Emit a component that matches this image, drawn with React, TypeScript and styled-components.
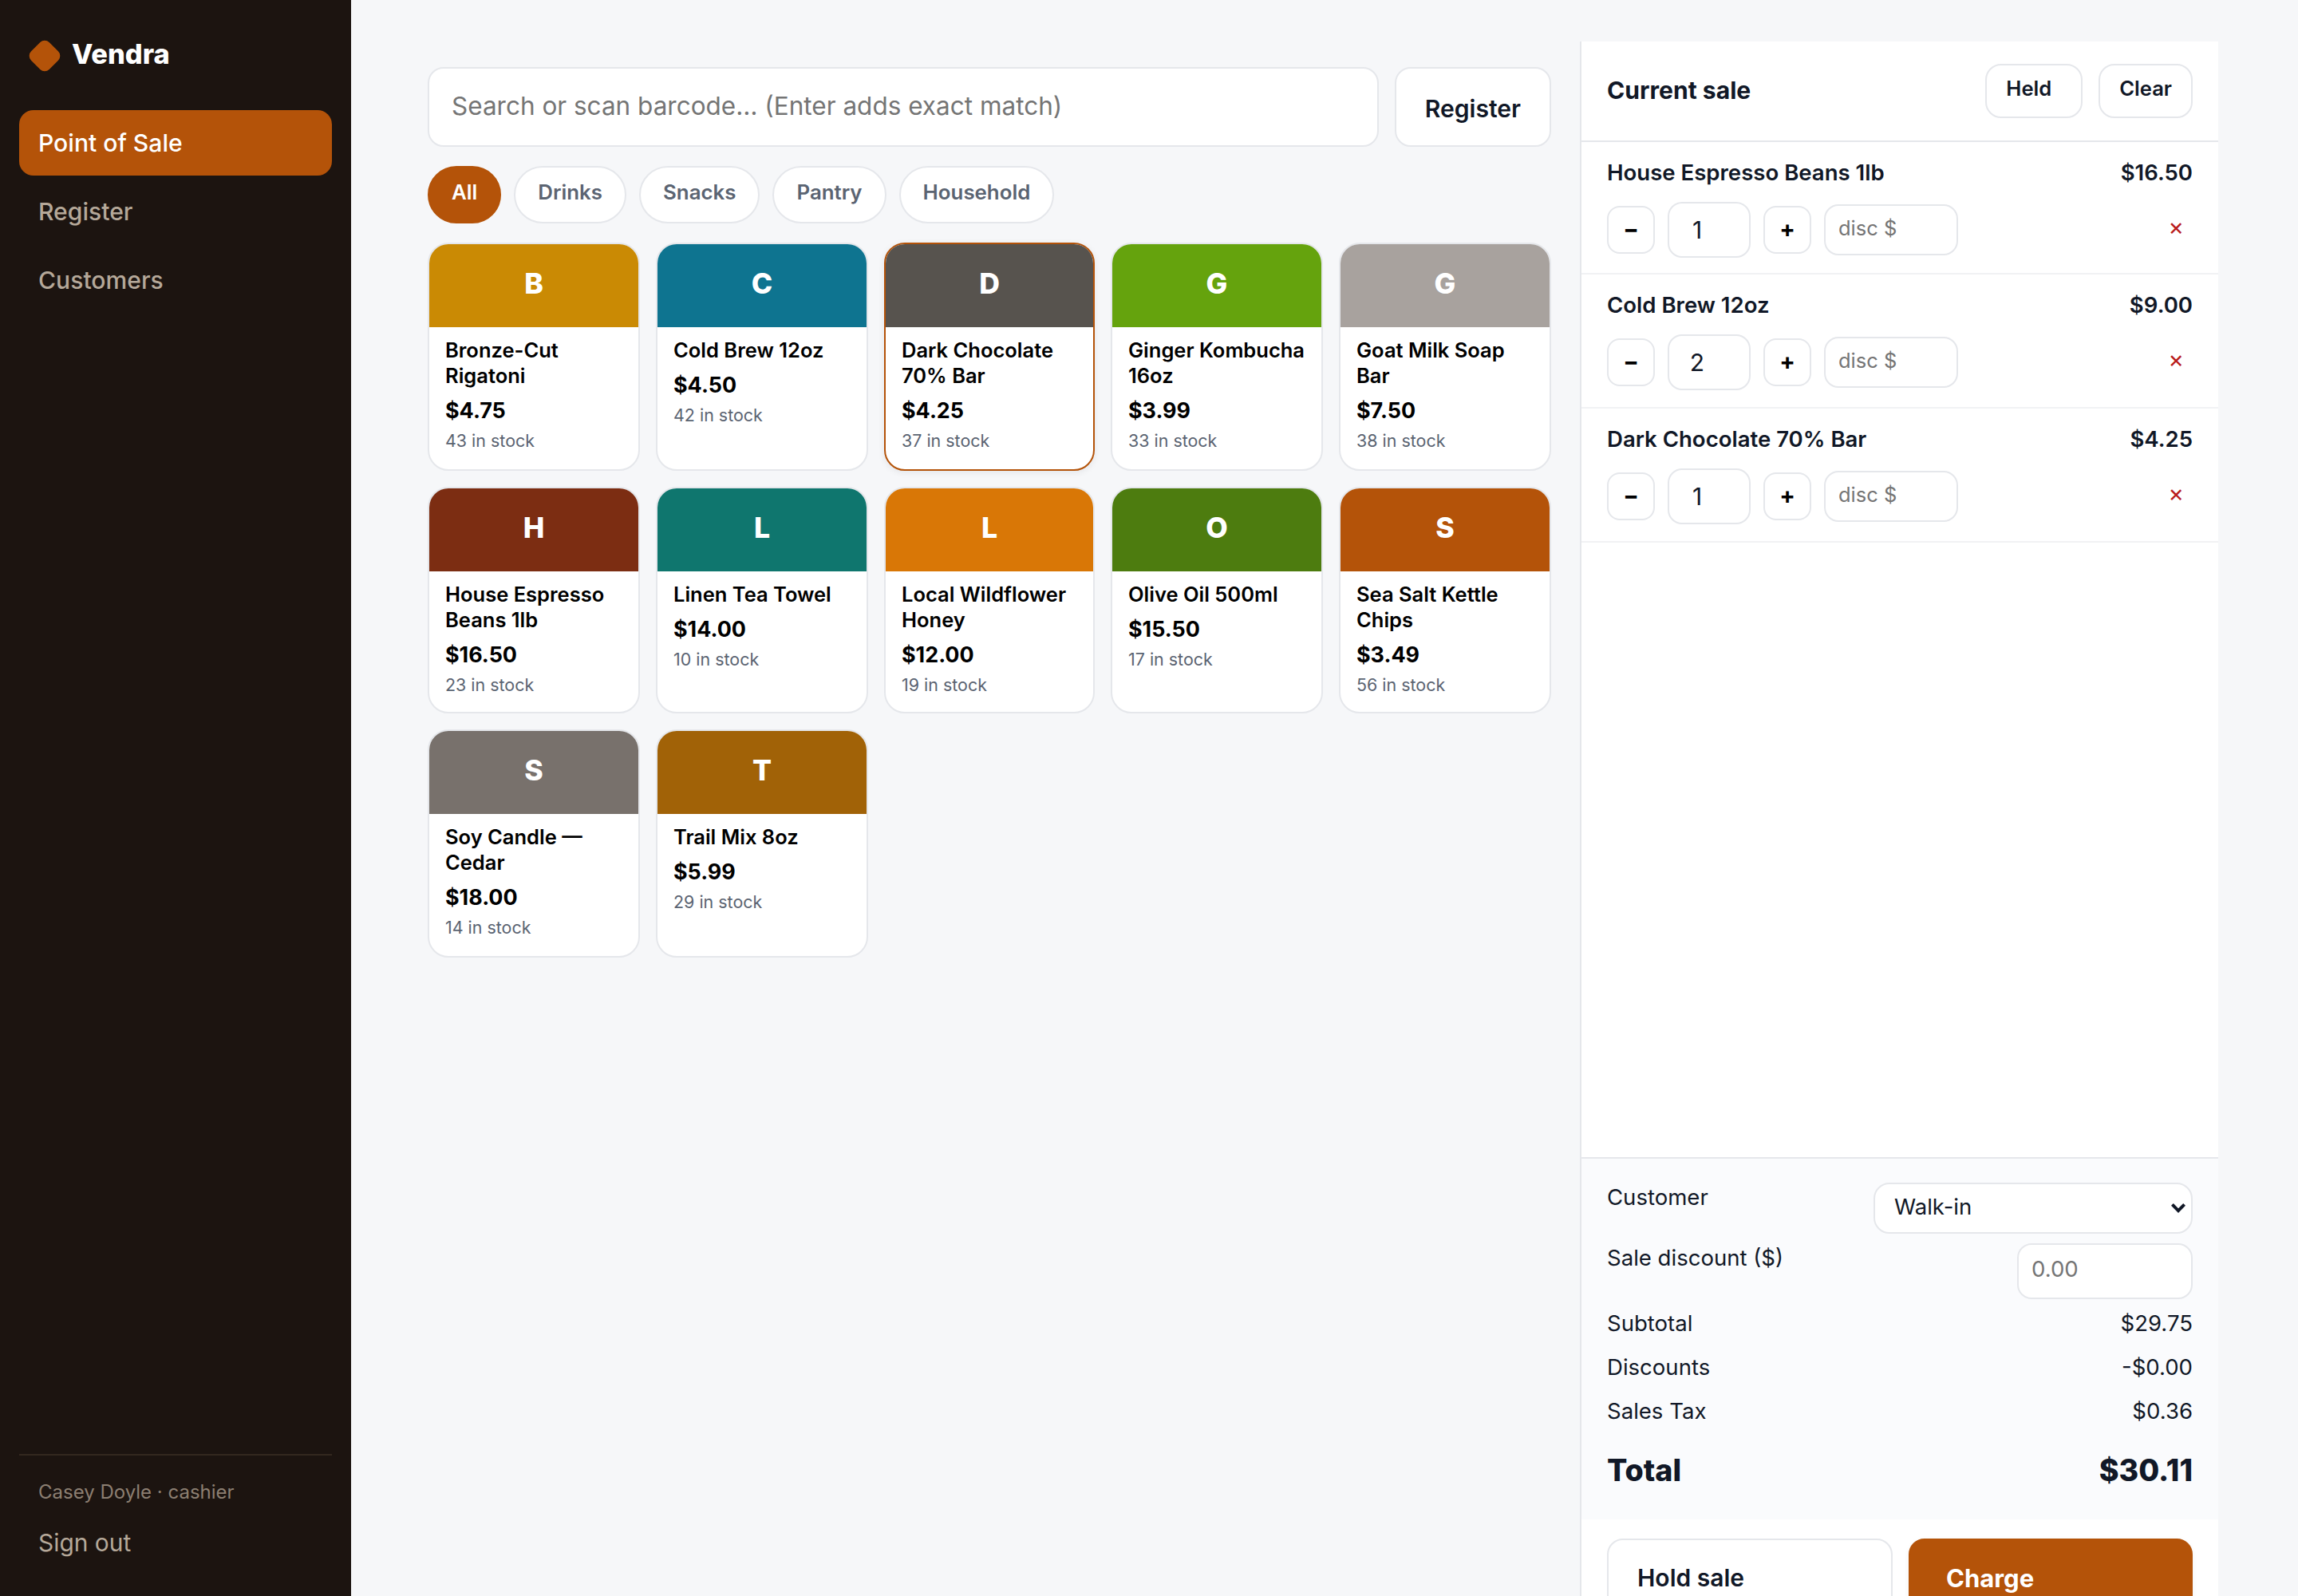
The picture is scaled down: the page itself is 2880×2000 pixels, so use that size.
import React from 'react';
import styled, { createGlobalStyle } from 'styled-components';

const GlobalStyle = createGlobalStyle`
  *, *::before, *::after {
    box-sizing: border-box;
  }

  body {
    margin: 0;
    background: #f6f7f9;
    color: #111827;
    font-family: Inter, 'Liberation Sans', sans-serif;
    overflow: hidden;
  }

  button, input {
    font-family: inherit;
    margin: 0;
    outline: none;
  }

  input::placeholder {
    color: #757575;
    opacity: 1;
  }
`;

const Shell = styled.div`
  display: flex;
  width: 2880px;
  height: 2000px;
  overflow: hidden;
`;

/* ---------- sidebar ---------- */

const Sidebar = styled.aside`
  display: flex;
  flex-direction: column;
  flex: 0 0 440px;
  height: 2000px;
  padding: 54px 24px 40px;
  background: #1c1410;
`;

const Brand = styled.div`
  display: flex;
  align-items: center;
  gap: 18px;
  height: 32px;
  margin: 0 0 52px 16px;
`;

const BrandMark = styled.span`
  width: 32px;
  height: 32px;
  border-radius: 8px;
  background: #b45309;
  transform: rotate(45deg);
`;

const BrandName = styled.span`
  padding-bottom: 4px;
  color: #fff;
  font-size: 34.4px;
  font-weight: 800;
  line-height: 40px;
`;

const Nav = styled.nav`
  display: flex;
  flex-direction: column;
  gap: 4px;
`;

const NavLink = styled.a<{ $active?: boolean }>`
  display: flex;
  align-items: center;
  height: 82px;
  padding: 0 24px;
  border-radius: 18px;
  background: ${(p) => (p.$active ? '#b45309' : 'transparent')};
  color: ${(p) => (p.$active ? '#fff' : '#b5a899')};
  font-size: 30.1px;
  font-weight: 500;
`;

const SidebarFooter = styled.div`
  display: flex;
  flex-direction: column;
  height: 138px;
  margin-top: auto;
  padding: 27px 24px 0;
  border-top: 2px solid #33281f;
`;

const UserName = styled.span`
  color: #8c7f72;
  font-size: 24px;
  line-height: 38px;
`;

const SignOut = styled.a`
  margin-top: 24px;
  color: #b5a899;
  font-size: 29.9px;
  line-height: 40px;
`;

/* ---------- catalog ---------- */

const Main = styled.main`
  display: flex;
  align-items: flex-start;
  flex: 1;
  padding: 52px 100px 0 60px;
`;

const Catalog = styled.section`
  display: flex;
  flex-direction: column;
  gap: 24px;
  flex: 1;
  min-width: 0;
  padding: 32px 36px;
`;

const SearchRow = styled.div`
  display: flex;
  gap: 20px;
  height: 100px;
`;

const SearchInput = styled.input`
  flex: 1;
  min-width: 0;
  padding: 0 28px 3px;
  border: 2px solid #e5e7eb;
  border-radius: 20px;
  background: #fff;
  font-size: 31.5px;
`;

const RegisterButton = styled.button`
  padding: 3px 36px 0;
  border: 2px solid #e5e7eb;
  border-radius: 20px;
  background: #fff;
  color: #111827;
  font-size: 30.1px;
  font-weight: 600;
`;

const Pills = styled.div`
  display: flex;
  gap: 16px;
`;

const Pill = styled.button<{ $active?: boolean }>`
  height: 72px;
  padding: 0 28px 7px;
  border: 2px solid ${(p) => (p.$active ? '#b45309' : '#e5e7eb')};
  border-radius: 36px;
  background: ${(p) => (p.$active ? '#b45309' : '#fff')};
  color: ${(p) => (p.$active ? '#fff' : '#5b6472')};
  font-size: 25.85px;
  font-weight: 600;
`;

const Grid = styled.div`
  display: grid;
  grid-template-columns: 266px 266px 264px 266px 266px;
  grid-template-rows: 286px 284px 286px;
  gap: 20px;
`;

const Card = styled.article<{ $focused?: boolean }>`
  overflow: hidden;
  border: 2px solid ${(p) => (p.$focused ? '#b45309' : '#e5e7eb')};
  border-radius: 26px;
  background: #fff;
  color: #000;
  box-shadow: ${(p) => (p.$focused ? '0 2px 8px rgba(16, 24, 40, 0.08)' : 'none')};
`;

const Swatch = styled.div<{ $color: string }>`
  display: flex;
  align-items: center;
  justify-content: center;
  height: 104px;
  padding-bottom: 6px;
  background: ${(p) => p.$color};
  color: #fff;
  font-size: 35.6px;
  font-weight: 800;
`;

const CardBody = styled.div`
  padding: 12.5px 16px 0 20px;
`;

const CardName = styled.div`
  font-size: 25.5px;
  font-weight: 600;
  line-height: 32px;
`;

const CardPrice = styled.div`
  margin-top: 11.5px;
  font-size: 26.9px;
  font-weight: 700;
  line-height: 32px;
`;

const CardStock = styled.div`
  margin-top: 9px;
  color: #5b6472;
  font-size: 21.45px;
  line-height: 26px;
`;

/* ---------- current sale ---------- */

const SalePanel = styled.section`
  display: flex;
  flex-direction: column;
  flex: 0 0 800px;
  height: 2000px;
  border-left: 2px solid #e5e7eb;
  background: #fff;
`;

const SaleHeader = styled.header`
  display: flex;
  align-items: center;
  gap: 20px;
  height: 126px;
  padding: 0 32px;
  border-bottom: 2px solid #e5e7eb;
`;

const SaleTitle = styled.h2`
  margin: 0 auto 0 0;
  padding-bottom: 2px;
  font-size: 30.1px;
  font-weight: 700;
`;

const SmallButton = styled.button<{ $extra?: number }>`
  height: 68px;
  padding: 0 ${(p) => 24 + (p.$extra ?? 0)}px 7px 24px;
  border: 2px solid #e5e7eb;
  border-radius: 20px;
  background: #fff;
  color: #111827;
  font-size: 25.6px;
  font-weight: 600;
`;

const Lines = styled.div`
  flex: 1;
`;

const Line = styled.div`
  height: 168px;
  padding: 21px 32px 0;
  border-bottom: 2px solid #f1f2f4;

  &:first-child {
    height: 166px;
  }
`;

const LineTop = styled.div`
  display: flex;
  justify-content: space-between;
  font-size: 27.55px;
  font-weight: 600;
  line-height: 34px;
`;

const LineControls = styled.div`
  display: flex;
  align-items: center;
  gap: 16px;
  height: 72px;
  margin-top: 19px;
`;

const StepButton = styled.button`
  width: 60px;
  height: 60px;
  padding: 0 0 4px;
  border: 2px solid #e5e7eb;
  border-radius: 16px;
  background: #fff;
  color: #000;
  font-size: 29px;
  font-weight: 700;
`;

const QtyInput = styled.input`
  width: 104px;
  height: 70px;
  padding: 0 42px 0 12px;
  border: 2px solid #e5e7eb;
  border-radius: 18px;
  background: #fff;
  color: #111827;
  font-size: 30px;
  text-align: center;
`;

const MoneyInput = styled.input<{ $wide?: boolean }>`
  width: ${(p) => (p.$wide ? 220 : 168)}px;
  height: ${(p) => (p.$wide ? 70 : 64)}px;
  padding: 0 16px ${(p) => (p.$wide ? 6 : 5)}px;
  border: 2px solid #e5e7eb;
  border-radius: 18px;
  background: #fff;
  font-size: ${(p) => (p.$wide ? 27.6 : 25.5)}px;
`;

const RemoveButton = styled.button`
  margin-left: auto;
  padding: 0 11px 8px;
  border: 0;
  background: none;
  color: #b91c1c;
  font-size: 30px;
  font-weight: 400;
`;

const Summary = styled.div`
  display: flex;
  flex-direction: column;
  gap: 12px;
  height: 454px;
  padding: 30px 32px 0;
  border-top: 2px solid #e5e7eb;
  background: #fafbfd;
`;

const SummaryRow = styled.div`
  display: flex;
  align-items: flex-start;
  justify-content: space-between;
  min-height: 43.2px;
  font-size: 27.55px;
  line-height: 36px;
`;

const TotalRow = styled.div`
  display: flex;
  justify-content: space-between;
  margin-top: 13px;
  font-size: 37.6px;
  font-weight: 800;
  line-height: 48px;
`;

const CustomerSelect = styled.button`
  display: flex;
  align-items: center;
  justify-content: space-between;
  width: 400px;
  height: 64px;
  padding: 0 7px 0 24px;
  border: 2px solid #e5e7eb;
  border-radius: 20px;
  background: #fff;
  color: #111827;
  font-size: 27.5px;
`;

const SelectValue = styled.span`
  padding-bottom: 4px;
`;

const SaleActions = styled.div`
  display: grid;
  grid-template-columns: 358px 356px;
  gap: 20px;
  padding: 24px 32px;
`;

const ActionButton = styled.button<{ $primary?: boolean }>`
  height: 100px;
  padding: 0 ${(p) => (p.$primary ? 45 : 36)}px 2px;
  border: 2px solid ${(p) => (p.$primary ? '#b45309' : '#e5e7eb')};
  border-radius: 20px;
  background: ${(p) => (p.$primary ? '#b45309' : '#fff')};
  box-shadow: ${(p) => (p.$primary ? '0 2px 6px rgba(16, 24, 40, 0.06)' : 'none')};
  color: ${(p) => (p.$primary ? '#fff' : '#111827')};
  font-size: ${(p) => (p.$primary ? 31 : 30)}px;
  font-weight: ${(p) => (p.$primary ? 700 : 600)};
  text-align: left;
`;

const categories = ['All', 'Drinks', 'Snacks', 'Pantry', 'Household'];

const products = [
  { name: 'Bronze-Cut Rigatoni', price: 4.75, stock: 43, color: '#ca8a04' },
  { name: 'Cold Brew 12oz', price: 4.5, stock: 42, color: '#0e7490' },
  { name: 'Dark Chocolate 70% Bar', price: 4.25, stock: 37, color: '#57534e', focused: true },
  { name: 'Ginger Kombucha 16oz', price: 3.99, stock: 33, color: '#65a30d' },
  { name: 'Goat Milk Soap Bar', price: 7.5, stock: 38, color: '#a8a29e' },
  { name: 'House Espresso Beans 1lb', price: 16.5, stock: 23, color: '#7c2d12' },
  { name: 'Linen Tea Towel', price: 14, stock: 10, color: '#0f766e' },
  { name: 'Local Wildflower Honey', price: 12, stock: 19, color: '#d97706' },
  { name: 'Olive Oil 500ml', price: 15.5, stock: 17, color: '#4d7c0f' },
  { name: 'Sea Salt Kettle Chips', price: 3.49, stock: 56, color: '#b45309' },
  { name: 'Soy Candle — Cedar', price: 18, stock: 14, color: '#78716c' },
  { name: 'Trail Mix 8oz', price: 5.99, stock: 29, color: '#a16207' },
];

const saleLines = [
  { name: 'House Espresso Beans 1lb', qty: 1, total: 16.5 },
  { name: 'Cold Brew 12oz', qty: 2, total: 9 },
  { name: 'Dark Chocolate 70% Bar', qty: 1, total: 4.25 },
];

const money = (n: number) => `$${n.toFixed(2)}`;

const ChevronDown = () => (
  <svg width="18" height="12" viewBox="0 0 18 12" fill="none">
    <path d="M1.4 1.4L9 9.1L16.6 1.4" stroke="#111827" strokeWidth="4" />
  </svg>
);

const App: React.FC = () => {
  return (
    <>
      <GlobalStyle />
      <Shell>
        <Sidebar>
          <Brand>
            <BrandMark />
            <BrandName>Vendra</BrandName>
          </Brand>
          <Nav>
            <NavLink $active>Point of Sale</NavLink>
            <NavLink>Register</NavLink>
            <NavLink>Customers</NavLink>
          </Nav>
          <SidebarFooter>
            <UserName>Casey Doyle · cashier</UserName>
            <SignOut>Sign out</SignOut>
          </SidebarFooter>
        </Sidebar>

        <Main>
          <Catalog>
            <SearchRow>
              <SearchInput placeholder="Search or scan barcode… (Enter adds exact match)" />
              <RegisterButton>Register</RegisterButton>
            </SearchRow>
            <Pills>
              {categories.map((c) => (
                <Pill key={c} $active={c === 'All'}>{c}</Pill>
              ))}
            </Pills>
            <Grid>
              {products.map((p) => (
                <Card key={p.name} $focused={p.focused}>
                  <Swatch $color={p.color}>{p.name[0]}</Swatch>
                  <CardBody>
                    <CardName>{p.name}</CardName>
                    <CardPrice>{money(p.price)}</CardPrice>
                    <CardStock>{p.stock} in stock</CardStock>
                  </CardBody>
                </Card>
              ))}
            </Grid>
          </Catalog>

          <SalePanel>
            <SaleHeader>
              <SaleTitle>Current sale</SaleTitle>
              <SmallButton $extra={13}>Held</SmallButton>
              <SmallButton>Clear</SmallButton>
            </SaleHeader>
            <Lines>
              {saleLines.map((l) => (
                <Line key={l.name}>
                  <LineTop>
                    <span>{l.name}</span>
                    <span>{money(l.total)}</span>
                  </LineTop>
                  <LineControls>
                    <StepButton>−</StepButton>
                    <QtyInput defaultValue={l.qty} />
                    <StepButton>+</StepButton>
                    <MoneyInput placeholder="disc $" />
                    <RemoveButton>×</RemoveButton>
                  </LineControls>
                </Line>
              ))}
            </Lines>
            <Summary>
              <SummaryRow>
                <span>Customer</span>
                <CustomerSelect>
                  <SelectValue>Walk-in</SelectValue>
                  <ChevronDown />
                </CustomerSelect>
              </SummaryRow>
              <SummaryRow>
                <span>Sale discount ($)</span>
                <MoneyInput $wide placeholder="0.00" />
              </SummaryRow>
              <SummaryRow>
                <span>Subtotal</span>
                <span>{money(29.75)}</span>
              </SummaryRow>
              <SummaryRow>
                <span>Discounts</span>
                <span>-{money(0)}</span>
              </SummaryRow>
              <SummaryRow>
                <span>Sales Tax</span>
                <span>{money(0.36)}</span>
              </SummaryRow>
              <TotalRow>
                <span>Total</span>
                <span>{money(30.11)}</span>
              </TotalRow>
            </Summary>
            <SaleActions>
              <ActionButton>Hold sale</ActionButton>
              <ActionButton $primary>Charge</ActionButton>
            </SaleActions>
          </SalePanel>
        </Main>
      </Shell>
    </>
  );
};

export default App;
